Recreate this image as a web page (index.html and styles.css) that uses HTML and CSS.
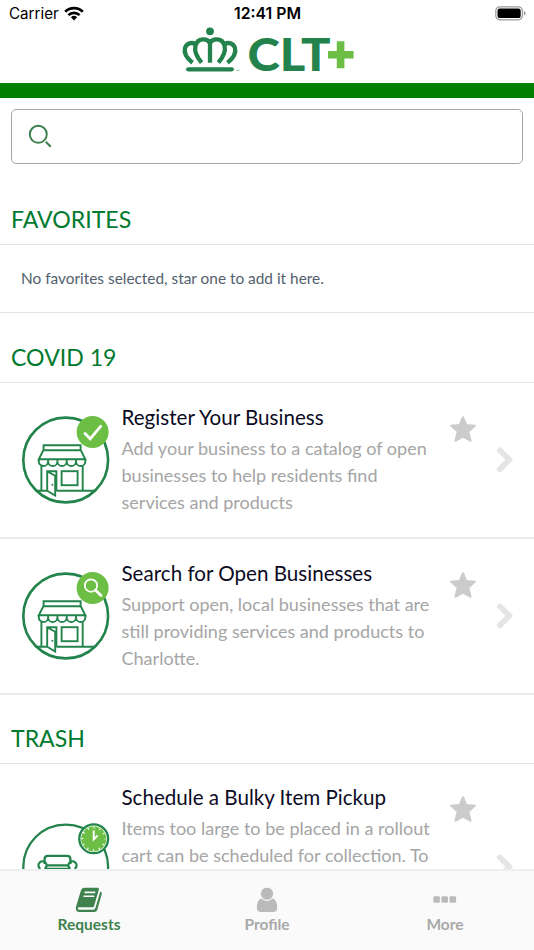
FILE: index.html
```html
<!DOCTYPE html>
<html lang="en">
<head>
  <meta charset="UTF-8">
  <title>CLT+</title>
  <meta name="viewport" content="width=device-width, initial-scale=1.0">
  <link rel="stylesheet" href="styles.css">
</head>
<body>

<!-- Shared icons -->
<svg class="sprite" width="0" height="0">
  <symbol id="star" viewBox="0 0 28 28">
    <path d="M14 2.2 L17.2 10 L25.8 10.7 L19.3 16.4 L21.6 25.8 L14 21.6 L6.4 25.8 L8.7 16.4 L2.2 10.7 L10.8 10 Z" fill="#cbcbcb" stroke="#cbcbcb" stroke-width="2" stroke-linejoin="round"/>
  </symbol>
  <symbol id="chevron" viewBox="0 0 18 30">
    <path d="M5 2.6 L16.2 13.4 Q17.4 14.6 16.2 15.8 L5 27.2 Q4 28 3 27.2 L0.9 25 Q0.2 24 1 23.1 L9.3 14.7 L1 6.5 Q0.2 5.6 0.9 4.7 L3 2.6 Q4 1.8 5 2.6 Z" fill="#e5e5e5"/>
  </symbol>
  <symbol id="shop" viewBox="0 0 92 91">
    <g fill="none" stroke="#22834b" stroke-width="1.9">
      <circle cx="45.7" cy="46" r="42.4" stroke-width="2.6"/>
      <path d="M23.6 36 V31.2 H60.6 V36 M23.3 36.3 H60.8 L65.3 45.2 H18.8 Z"/>
      <path d="M18.8 45 v2.4 a4.65 4.6 0 0 0 9.3 0 a4.65 4.6 0 0 0 9.3 0 a4.65 4.6 0 0 0 9.3 0 a4.65 4.6 0 0 0 9.3 0 a4.65 4.6 0 0 0 9.3 0 V45 M28.1 45 v2.4 M37.4 45 v2.4 M46.7 45 v2.4 M56 45 v2.4"/>
      <path d="M21.4 52 V76.7 M62.7 52 V76.7"/>
      <path d="M27.2 76.7 V57.2 H36.4 V76.7 M27.2 57.5 L35.2 61.7 V81.5 L27.2 76.7"/>
      <path d="M15.5 76.7 H27.2 M36.4 76.7 H75"/>
      <rect x="41.6" y="57.2" width="16" height="14"/>
    </g>
    <circle cx="32.4" cy="70.7" r="1" fill="#22834b"/>
  </symbol>
</svg>

<div class="status-bar">
  <div class="carrier">
    <span>Carrier</span>
    <svg width="20" height="15" viewBox="0 0 20 15">
      <g fill="none" stroke="#000" stroke-width="2.7">
        <path d="M1.2 5.8 A12.6 12.6 0 0 1 18.8 5.8"/>
        <path d="M4.4 9.1 A8 8 0 0 1 15.6 9.1"/>
      </g>
      <path d="M6.9 11.3 A4.5 4.5 0 0 1 13.1 11.3 L10 14.4 Z"/>
    </svg>
  </div>
  <div class="time">12:41 PM</div>
  <svg class="battery" width="31" height="15" viewBox="0 0 31 15">
    <rect x="0.8" y="0.8" width="26.6" height="13" rx="4" fill="none" stroke="#999" stroke-width="1.2"/>
    <rect x="2.5" y="2.5" width="23.2" height="9.6" rx="2.2"/>
    <path d="M28.9 5 Q30.6 5.6 30.6 7.3 Q30.6 9 28.9 9.6 Z" fill="#999"/>
  </svg>
</div>

<header>
  <svg class="logo" width="176" height="50" viewBox="0 0 176 50">
    <circle cx="30" cy="5.3" r="3.9" fill="#24824c"/>
    <g fill="none" stroke="#24824c" stroke-width="4.3">
      <path d="M30 13 V36.7"/>
      <path d="M21.6 36.7 C15.5 29.5 14.2 25 15.4 20 C17.5 11.5 27.5 11.8 30 17.5"/>
      <path d="M38.4 36.7 C44.5 29.5 45.8 25 44.6 20 C42.5 11.5 32.5 11.8 30 17.5"/>
      <path d="M12.5 36.7 C6 31.5 3.8 26.5 5 22 C6.5 17 11.5 16 15.5 18"/>
      <path d="M47.5 36.7 C54 31.5 56.2 26.5 55 22 C53.5 17 48.5 16 44.5 18"/>
      <path d="M8.2 43.3 H51.8" stroke-linecap="round"/>
    </g>
    <path d="M56.5 44.5 h3" stroke="#8fbfa3" stroke-width="1"/>
    <text class="logo-text" x="67.5" y="45" textLength="83" lengthAdjust="spacingAndGlyphs">CLT</text>
    <path d="M160.6 15.3 V42.3 M148 28.8 H173.6" stroke="#6cbe45" stroke-width="7.6"/>
  </svg>
</header>

<div class="search-box">
  <svg width="26" height="26" viewBox="0 0 26 26" fill="none" stroke="#3b814c">
    <circle cx="11.3" cy="11.3" r="8.5" stroke-width="1.9"/>
    <path d="M18.8 18.8 L23.7 23.7" stroke-width="2.1"/>
  </svg>
</div>

<main>
  <h2>FAVORITES</h2>
  <p class="empty">No favorites selected, star one to add it here.</p>

  <h2>COVID 19</h2>
  <div class="item">
    <svg class="picture" width="92" height="91" viewBox="0 0 92 91">
      <use href="#shop"/>
      <circle cx="72.6" cy="18" r="16" fill="#6cbe45"/>
      <path d="M65 19.5 L70.2 24.8 L80.8 12.2" fill="none" stroke="#fff" stroke-width="2.8" stroke-linecap="round"/>
    </svg>
    <div class="info">
      <h3>Register Your Business</h3>
      <p>Add your business to a catalog of open<br>businesses to help residents find<br>services and products</p>
    </div>
    <svg class="star" width="28" height="28"><use href="#star"/></svg>
    <svg class="chevron" width="18" height="30"><use href="#chevron"/></svg>
  </div>
  <div class="item">
    <svg class="picture" width="92" height="91" viewBox="0 0 92 91">
      <use href="#shop"/>
      <circle cx="72.6" cy="18" r="16" fill="#6cbe45"/>
      <g fill="none" stroke="#fff">
        <circle cx="71" cy="15.6" r="6.2" stroke-width="1.8"/>
        <path d="M75.6 20.2 L81 25.6" stroke-width="2.8" stroke-linecap="round"/>
      </g>
    </svg>
    <div class="info">
      <h3>Search for Open Businesses</h3>
      <p>Support open, local businesses that are<br>still providing services and products to<br>Charlotte.</p>
    </div>
    <svg class="star" width="28" height="28"><use href="#star"/></svg>
    <svg class="chevron" width="18" height="30"><use href="#chevron"/></svg>
  </div>

  <h2>TRASH</h2>
  <div class="item tall">
    <svg class="picture" width="92" height="91" viewBox="0 0 92 91">
      <g fill="none" stroke="#22834b" stroke-width="2.3">
        <circle cx="45.7" cy="46" r="42.4"/>
        <path d="M24.6 43 V38 Q24.6 34.8 28 34.8 H47 Q50.4 34.8 50.4 38 V43"/>
        <path d="M25.5 58 V47 A4 4 0 1 0 19.5 47 V60 H55.5 V47 A4 4 0 1 0 49.5 47 V58 M25.8 44.3 H49.2 M25.8 48 H49.2"/>
      </g>
      <circle cx="73.7" cy="17.8" r="14.4" fill="#fff" stroke="#22834b" stroke-width="2.3"/>
      <circle cx="73.7" cy="17.8" r="12.6" fill="#6cbe45"/>
      <circle cx="73.7" cy="17.8" r="11.4" fill="none" stroke="#fff" stroke-width="2" stroke-dasharray="1.1 4.869" stroke-dashoffset="0.55"/>
      <path d="M73.7 9.5 V18.4 L77.6 14.5" fill="none" stroke="#fff" stroke-width="2"/>
    </svg>
    <div class="info">
      <h3>Schedule a Bulky Item Pickup</h3>
      <p>Items too large to be placed in a rollout<br>cart can be scheduled for collection. To</p>
    </div>
    <svg class="star" width="28" height="28"><use href="#star"/></svg>
    <svg class="chevron" width="18" height="30"><use href="#chevron"/></svg>
  </div>
</main>

<nav>
  <div class="tab active">
    <svg width="28" height="28" viewBox="0 0 28 28">
      <path d="M9 1.8 H22.5 Q24.4 1.8 23.9 3.6 L19.1 20 Q18.7 21.3 17.3 21.3 H4 Q2.6 21.3 2.8 22.6 Q3.1 23.8 4.3 23.8 H18.2 Q19.8 23.8 20.4 22 L25.3 5.6 Q27.4 6.2 26.7 8.3 L22.4 23.4 Q21.7 26 19.2 26 H4.3 Q0.7 26 0.8 21.5 L6 4.3 Q6.8 1.8 9 1.8 Z" fill="currentColor"/>
      <path d="M9.5 6.4 H20.2 M8.5 10.2 H19.2" stroke="#fafafa" stroke-width="1.6"/>
    </svg>
    <span>Requests</span>
  </div>
  <div class="tab">
    <svg width="28" height="28" viewBox="0 0 28 28">
      <path d="M8.3 12.6 Q10.9 15 14 15 Q17.1 15 19.7 12.6 Q24.2 13.8 24.2 21.8 Q24.2 26 20.2 26 H7.8 Q3.8 26 3.8 21.8 Q3.8 13.8 8.3 12.6 Z" fill="#bababa"/>
      <circle cx="14" cy="7.7" r="6.5" fill="#bababa" stroke="#fafafa" stroke-width="0.8"/>
    </svg>
    <span>Profile</span>
  </div>
  <div class="tab">
    <svg width="28" height="28" viewBox="0 0 28 28" fill="#bababa">
      <rect x="2.3" y="10.2" width="6.6" height="6.6" rx="1.4"/>
      <rect x="10.4" y="10.2" width="6.6" height="6.6" rx="1.4"/>
      <rect x="18.5" y="10.2" width="6.6" height="6.6" rx="1.4"/>
    </svg>
    <span>More</span>
  </div>
</nav>

</body>
</html>
```
FILE: styles.css
```css
* {
  box-sizing: border-box;
}

body {
  margin: 0;
  height: 950px;
  display: flex;
  flex-direction: column;
  overflow: hidden;
  background-color: #fff;
  font-family: Lato, sans-serif;
}

svg {
  display: block;
  flex-shrink: 0;
}

.sprite {
  position: absolute;
}

.status-bar {
  height: 27px;
  flex-shrink: 0;
  display: grid;
  grid-template-columns: 1fr auto 1fr;
  align-items: center;
  padding: 0 8px 0 9px;
  font-family: Inter, sans-serif;
  font-size: 15.2px;
  color: #000;
}

.carrier {
  display: flex;
  align-items: center;
  gap: 5px;
}

.time {
  font-size: 15.8px;
  font-weight: 600;
}

.battery {
  justify-self: end;
}

header {
  height: 71px;
  flex-shrink: 0;
  border-bottom: 15px solid #008000;
}

.logo {
  margin: -1px auto 0 180px;
  overflow: visible;
}

.logo-text {
  font-size: 46px;
  font-weight: 900;
  fill: #24824c;
}

.search-box {
  height: 55px;
  flex-shrink: 0;
  margin: 11px 11px 0;
  padding: 0 0 1px 15px;
  display: flex;
  align-items: center;
  border: 1.5px solid #a6a6a6;
  border-radius: 5px;
}

main {
  flex: 1;
  min-height: 0;
  overflow: hidden;
  padding-top: 11px;
}

h2 {
  margin: 0;
  height: 70px;
  padding: 29px 11px 0;
  border-bottom: 1px solid #dde5ec;
  font-size: 23.1px;
  line-height: 30px;
  font-weight: 400;
  color: #007a2f;
}

.empty {
  margin: 0;
  height: 68px;
  padding-left: 21px;
  border-bottom: 1px solid #dde5ec;
  font-size: 15.4px;
  line-height: 67px;
  color: #52606d;
}

.item {
  height: 156px;
  display: flex;
  align-items: center;
  padding: 0 20px 0 20px;
  border-bottom: 2px solid #e6ebf0;
}

.item + h2 {
  height: 69px;
  padding-top: 28px;
}

/* long description, runs on below the tab bar */
.tall {
  height: 209px;
}

.picture {
  margin-top: -2px;
}

.info {
  align-self: flex-start;
  width: 327px;
  margin: 19px 0 0 9.5px;
  white-space: nowrap;
}

h3 {
  margin: 0 0 2px;
  font-size: 20.6px;
  line-height: 31px;
  font-weight: 400;
  color: #0b0b24;
}

.info p {
  margin: 0;
  font-size: 18.05px;
  line-height: 27px;
  color: #a5a5a5;
}

.star {
  align-self: flex-start;
  margin-top: 32px;
}

.tall .info {
  margin-top: 18px;
}

.tall .star {
  margin-top: 31px;
}

.chevron {
  margin-left: auto;
  margin-top: -1px;
}

nav {
  height: 81px;
  flex-shrink: 0;
  display: flex;
  background-color: #fafafa;
  border-top: 2px solid #edeff2;
}

.tab {
  flex: 1;
  display: flex;
  flex-direction: column;
  align-items: center;
  padding-top: 15px;
  font-size: 15.5px;
  line-height: 20px;
  font-weight: 700;
  color: #a9a9a9;
}

.active {
  color: #3f824e;
}
```
